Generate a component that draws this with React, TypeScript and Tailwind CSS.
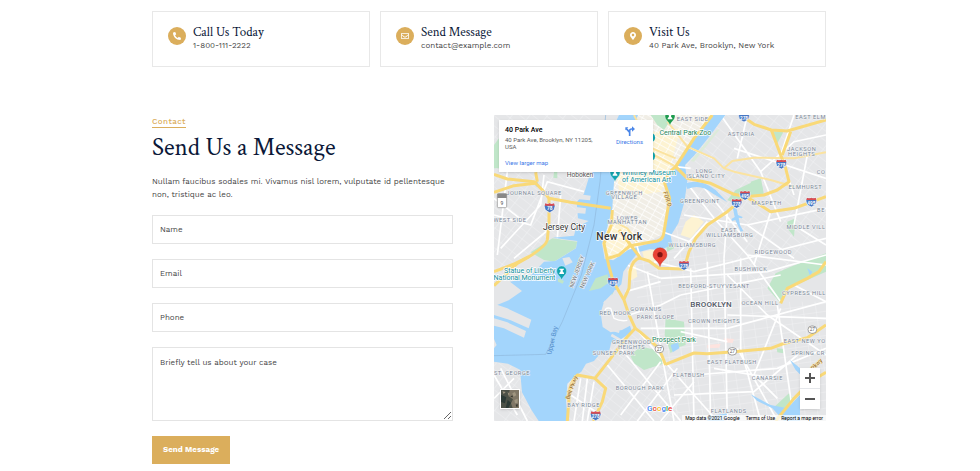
import { FaMapMarkerAlt, FaPhoneAlt, FaRegEnvelope } from 'react-icons/fa';

const cards = [
  { title: 'Call Us Today', text: '1-800-111-2222', icon: FaPhoneAlt },
  { title: 'Send Message', text: 'contact@example.com', icon: FaRegEnvelope },
  { title: 'Visit Us', text: '40 Park Ave, Brooklyn, New York', icon: FaMapMarkerAlt },
];

const highways = [
  'M0 178L40 192L120 200L145 225L165 250L230 262L350 280',
  'M0 232L60 212L130 204M125 172L130 200',
  'M165 250L165 320L160 375Q155 395 100 428L70 445L0 512',
  'M0 470L60 447L105 425',
  'M355 285L352 330L330 385L345 455L358 500L390 555L405 600L424 640',
  'M335 432L375 420L408 392L490 378Q508 374 510 350L527 250L512 205L525 172L545 155L600 70L655 0',
  'M375 345L410 390L440 430L465 438L495 460L570 462L585 410L605 370L640 330L700 290L752 245',
  'M390 552L405 520L408 470Q415 432 440 428',
  'M424 640L400 665L350 730L303 790L250 780Q222 810 225 850L220 918',
  'M303 790L335 820L325 860L298 918',
  'M424 640L440 652L495 700L515 750',
  'M515 748L600 714L640 716L720 710L830 700L865 687L940 668L996 630',
  'M545 155L580 190L650 205L720 238L755 245L810 240L850 225L885 200L875 160L860 120L832 45',
  'M740 0L780 28L832 45L880 48L996 15',
  'M755 245L785 262L830 290L900 280L996 245',
  'M860 565L880 520L940 490L975 470L996 440',
  'M865 120L890 50',
  'M845 918L900 850L950 800L996 772',
];

const avenues = [
  'M580 95L660 130L690 160L720 170L830 195L900 215',
  'M690 160L715 138L780 128L900 130L996 112',
  'M360 320L400 340L430 380',
  'M520 20L580 95',
  'M440 85L545 130',
  'M420 0L480 120L545 155',
];

const streets = [
  'M0 300L110 330L160 200L270 230M20 400L140 270L150 180M0 250L90 320M40 170L10 420M60 430L180 330M200 240L190 370',
  'M460 470L500 700L540 918M480 440L600 470L996 370M500 490L820 470L996 420M440 640L700 640L996 560',
  'M560 180L660 310L760 420L860 560M600 180L760 380M570 300L760 330L996 280M640 320L540 430M700 290L690 430',
  'M590 460L600 918M640 440L650 918M690 430L700 918M740 430L740 700L800 918M560 540L860 480',
  'M425 640L600 840L670 918M380 700L560 918M340 750L480 918M500 740L380 900M550 760L430 918M600 800L500 918',
  'M680 0L800 170L860 320M720 100L996 190M760 0L730 130M900 0L860 120L900 240M996 60L900 80L800 170M940 120L900 330L996 390',
  'M760 420L996 450M830 290L780 450M760 330L900 430M700 480L820 600L996 720M850 570L900 918M900 510L996 560M860 580L780 780L850 850',
  'M600 780L850 760L996 700M540 840L780 830L910 720M700 600L996 610M730 700L850 918M660 760L840 790M560 650L700 680',
  'M230 840L320 900M260 790L240 918M280 790L265 918M300 800L280 918',
  'M0 780L70 900M0 850L60 790M20 760L100 918M400 450L500 490M395 530L500 500M405 600L500 570L560 540',
];

const parks = [
  'M110 412L175 370L250 380L245 400L180 440L150 435Z',
  'M515 610L570 620L575 690L545 700L530 715L512 660Z',
  'M408 720L440 695L490 705L512 745L450 765L420 745Z',
  'M820 520L845 475L890 455L996 415L996 470L940 495L885 520L860 565Z',
  'M700 255L725 225L800 190L810 240L770 240L720 265Z',
  'M835 48L868 52L850 85Z',
  'M770 200L800 190L808 230L780 235Z',
  'M880 320L905 310L900 365L880 340Z',
  'M0 90L15 70L15 160L0 160Z',
  'M470 0L540 0L510 45L490 30Z',
  'M515 385L535 380L540 400L520 410Z',
  'M838 878L885 835L900 855L860 890Z',
  'M350 520L365 535L355 550Z',
  'M180 170L190 170L190 190L178 188Z',
  'M848 700L870 702L868 715L850 712Z',
];

const areas: [number, number, string][] = [
  [596, 18, 'EAST SIDE'],
  [742, 64, 'ASTORIA'],
  [950, 12, 'EAST ELM'],
  [923, 108, 'JACKSON'],
  [923, 123, 'HEIGHTS'],
  [631, 173, 'LONG'],
  [635, 188, 'ISLAND CITY'],
  [934, 221, 'ELMHURST'],
  [981, 178, 'CO'],
  [618, 265, 'GREENPOINT'],
  [818, 271, 'MASPETH'],
  [981, 291, 'BE'],
  [120, 241, 'JOURNAL SQUARE'],
  [391, 239, 'GREENWICH'],
  [391, 253, 'VILLAGE'],
  [400, 314, 'LOWER'],
  [400, 328, 'MANHATTAN'],
  [48, 320, 'WEST SIDE'],
  [705, 352, 'EAST'],
  [707, 367, 'WILLIAMSBURG'],
  [936, 341, 'MIDDLE VILL'],
  [595, 397, 'WILLIAMSBURG'],
  [838, 418, 'RIDGEWOOD'],
  [771, 469, 'BUSHWICK'],
  [660, 519, 'BEDFORD-STUYVESANT'],
  [930, 539, 'CYPRESS HILL'],
  [798, 571, 'OCEAN HILL'],
  [364, 600, 'RED HOOK'],
  [456, 589, 'GOWANUS'],
  [485, 613, 'PARK SLOPE'],
  [660, 623, 'CROWN HEIGHTS'],
  [932, 684, 'EAST NEW YO'],
  [413, 686, 'GREENWOOD'],
  [413, 701, 'HEIGHTS'],
  [360, 721, 'SUNSET PARK'],
  [942, 719, 'SPRING CR'],
  [714, 748, 'EAST FLATBUSH'],
  [584, 787, 'FLATBUSH'],
  [54, 781, 'ST. GEORGE'],
  [820, 794, 'CANARSIE'],
  [438, 825, 'BOROUGH PARK'],
  [269, 876, 'BAY RIDGE'],
  [704, 893, 'FLATLANDS'],
];

const interstates: [number, number, string][] = [
  [750, 6, '278'],
  [862, 147, '278'],
  [753, 241, '495'],
  [728, 265, '278'],
  [952, 261, '495'],
  [167, 278, '78'],
  [570, 451, '278'],
  [357, 501, '478'],
  [305, 902, '278'],
];

const routes: [number, number][] = [
  [496, 702],
  [715, 709],
  [955, 644],
];

function Interstate({ x, y, label }: { x: number; y: number; label: string }) {
  return (
    <g transform={`translate(${x} ${y})`}>
      <path
        d="M-13 -13Q-6 -9 0 -13Q6 -9 13 -13Q19 -4 14 5Q10 11 0 15Q-10 11 -14 5Q-19 -4 -13 -13Z"
        fill="#4677c4"
        stroke="#fff"
        strokeWidth="2"
      />
      <path d="M-13 -13Q-6 -9 0 -13Q6 -9 13 -13L15 -6H-15Z" fill="#dc4c50" />
      <text y="8" fontSize="14" fontWeight="700" fill="#fff" textAnchor="middle">
        {label}
      </text>
    </g>
  );
}

function Pin({ x, y, color }: { x: number; y: number; color: string }) {
  return (
    <g transform={`translate(${x} ${y})`}>
      <path d="M0 21C-3 9 -15 6 -15 -6A15 15 0 0 1 15 -6C15 6 3 9 0 21Z" fill={color} stroke="#fff" strokeWidth="1" />
      <path d="M-7 -13H7V-10H4L3 -5L7 0V3H-7V0L-3 -5L-4 -10H-7Z" fill="#fff" />
    </g>
  );
}

function MapDrawing() {
  return (
    <svg
      viewBox="0 0 996 918"
      preserveAspectRatio="xMidYMid slice"
      className="block h-full w-full font-[Roboto,sans-serif]"
      role="img"
      aria-label="Map of Brooklyn, New York"
    >
      <defs>
        <pattern id="grid-manhattan" width="28" height="15" patternUnits="userSpaceOnUse" patternTransform="rotate(29)">
          <path d="M0 0H28M0 0V15" stroke="#fff" strokeWidth="4" />
        </pattern>
        <pattern id="grid-brooklyn" width="38" height="24" patternUnits="userSpaceOnUse" patternTransform="rotate(-8)">
          <path d="M0 0H38M0 0V24" stroke="#f1f2f3" strokeWidth="3" />
        </pattern>
        <pattern id="grid-slope" width="42" height="24" patternUnits="userSpaceOnUse" patternTransform="rotate(38)">
          <path d="M0 0H42M0 0V24" stroke="#f1f2f3" strokeWidth="3" />
        </pattern>
      </defs>

      <rect width="996" height="918" fill="#e5e6e8" />
      <path d="M0 0H310L270 235L240 365L110 410L0 500Z" fill="url(#grid-slope)" />
      <path d="M690 0H996V330L860 560L560 300L575 150Z" fill="url(#grid-slope)" />
      <path d="M400 450L520 410L560 300L860 560H996V918H540Z" fill="url(#grid-brooklyn)" />
      <path d="M420 640L540 760L560 918H220V800Z" fill="url(#grid-slope)" />
      <path d="M0 740L75 760L130 918H0Z" fill="url(#grid-slope)" />
      <path d="M430 0H660L545 155L515 205L520 350L355 435L325 390L365 170Z" fill="#f1eee6" />
      <path d="M410 60L560 40L530 150L500 230L380 250L365 170Z" fill="#fdf3d2" />
      <path d="M350 320L400 340L410 395L345 430L328 390Z" fill="#fdf3d2" />
      <path d="M430 0H660L545 155L515 205L520 350L355 435L325 390L365 170Z" fill="url(#grid-manhattan)" />
      <path d="M575 320L600 300L630 320L590 370L560 360ZM445 410L500 400L480 440L450 430ZM400 465L425 450L430 485L405 500Z" fill="#fdf3d2" />
      <path d="M640 690L680 686L676 698L640 700ZM690 670L720 672L716 684L690 682Z" fill="#fde3df" />

      {parks.map((d) => (
        <path key={d} d={d} fill="#c0e6c9" />
      ))}
      {streets.map((d) => (
        <path key={d} d={d} fill="none" stroke="#fff" strokeWidth="5" />
      ))}

      <g fill="#a3d5fc">
        <path d="M375 0H432L395 90L362 170L355 280L338 345L324 385L332 432L358 436L402 405L450 390L505 375L522 300L515 205L550 152L600 74L658 0H694L648 62L600 122L573 150L580 200L571 262L553 325L530 362L535 388L500 406L468 402L432 412L404 448L388 470L382 508L366 524L330 560L320 594L326 636L350 652L384 645L408 632L414 650L382 672L352 682L346 706L318 716L300 738L276 746L262 770L244 782L220 806L216 860L222 918H134L112 884L84 832L78 764L42 746L0 740V574L44 556L84 528L48 500L104 488L150 440L184 438L246 400L250 378L176 368L240 362L246 338L284 318L252 310L248 262L270 236L284 190L320 120Z" />
        <path d="M575 205Q620 190 665 225L700 262L655 235Q620 205 580 222Z" />
        <path d="M716 276L728 282L732 300L746 306L744 310L734 308L738 330L748 348L740 350L724 315L714 318L712 312L722 306Z" />
        <path d="M530 690L552 682L556 700L536 712ZM888 735L925 765L920 780L905 765ZM940 460L955 470L948 482Z" />
        <path d="M770 838L830 870L880 880L918 840V918H870L835 880L790 858Z" />
        <path d="M640 905L700 895L690 918H640ZM120 205L132 200L128 216Z" />
      </g>
      <g fill="#e5e6e8">
        <path d="M0 566L40 580L112 614L104 640L50 616L0 600Z" />
        <path d="M0 610L40 622L96 648L90 668L30 640L0 632Z" />
        <path d="M328 588L350 570L384 562L390 620L372 635L345 640L328 622Z" />
        <path d="M205 430L226 426L236 442L214 452Z" />
        <path d="M0 672L8 690L0 700Z" />
        <path d="M246 236L290 242L288 256L246 252ZM246 276L276 280L274 296L246 294Z" />
      </g>
      <path d="M345 566L366 526M330 560L372 590M340 640L376 650M352 660L380 676M318 716L340 730" stroke="#e5e6e8" strokeWidth="8" />
      <path d="M285 528L305 490L340 478L348 500L320 520ZM192 490L210 498L206 506L192 500Z" fill="#c0e6c9" />
      <path d="M668 45L678 42L600 140L590 138Z" fill="#dcebd9" />
      <path d="M333 594Q330 575 350 580L360 610Q380 620 400 616" fill="none" stroke="#fff" strokeWidth="4" />
      <path d="M425 380L440 430M505 350L600 385M580 95L655 130M545 155L590 160" stroke="#fff" strokeWidth="5" />
      <path d="M335 0L318 200L300 330L262 480L205 620L155 718L0 722" fill="none" stroke="#8fb8dc" strokeWidth="2" />

      {avenues.map((d) => (
        <path key={d} d={d} fill="none" stroke="#fbe3a0" strokeWidth="6" strokeLinejoin="round" />
      ))}
      {highways.map((d) => (
        <path key={d} d={d} fill="none" stroke="#f9d978" strokeWidth="9" strokeLinejoin="round" />
      ))}

      <g fontSize="17" fill="#7b8797" textAnchor="middle" className="tracking-widest" stroke="#f4f5f6" strokeWidth="3" paintOrder="stroke">
        {areas.map(([x, y, name]) => (
          <text key={`${name}-${y}`} x={x} y={y}>
            {name}
          </text>
        ))}
      </g>
      {interstates.map(([x, y, label]) => (
        <Interstate key={`${x}-${y}`} x={x} y={y} label={label} />
      ))}
      {routes.map(([x, y]) => (
        <g key={x} transform={`translate(${x} ${y})`}>
          <rect x="-13" y="-11" width="26" height="22" rx="11" fill="#fff" stroke="#777" strokeWidth="2" />
          <text y="5" fontSize="14" fill="#555" textAnchor="middle">
            27
          </text>
        </g>
      ))}
      <rect x="10" y="236" width="28" height="42" rx="4" fill="#fff" stroke="#888" strokeWidth="2" />
      <rect x="10" y="236" width="28" height="13" fill="#888" />
      <text x="24" y="270" fontSize="15" fill="#444" textAnchor="middle">
        9
      </text>

      <g stroke="#fff" strokeWidth="4" paintOrder="stroke" textAnchor="middle">
        <text x="258" y="186" fontSize="20" fill="#555">
          Hoboken
        </text>
        <text x="210" y="344" fontSize="26" fill="#333">
          Jersey City
        </text>
        <text x="376" y="374" fontSize="31" fontWeight="500" fill="#333" className="tracking-wide">
          New York
        </text>
        <text x="651" y="576" fontSize="24" fontWeight="600" fill="#59616d" className="tracking-wide">
          BROOKLYN
        </text>
        <g fontSize="21" fill="#25865a">
          <text x="574" y="59">Central Park Zoo</text>
          <text x="540" y="680">Prospect Park</text>
        </g>
        <g fontSize="21" fill="#12909c" textAnchor="start">
          <text x="384" y="179">Whitney Museum</text>
          <text x="384" y="201">of American Art</text>
        </g>
        <g fontSize="21" fill="#12909c" textAnchor="end">
          <text x="184" y="473">Statue of Liberty</text>
          <text x="184" y="495">National Monument</text>
        </g>
      </g>
      <g fontSize="17" textAnchor="middle">
        <g fill="#777" stroke="#e8eff5" strokeWidth="4" paintOrder="stroke">
          <text transform="translate(254 472) rotate(-70)">NEW JERSEY</text>
          <text transform="translate(285 483) rotate(-66)">NEW YORK</text>
        </g>
        <text transform="translate(181 677) rotate(-78)" fontSize="19" fill="#4f8ac9">
          Upper Bay
        </text>
        <g fill="#8a6224" stroke="#fbe9b8" strokeWidth="3" paintOrder="stroke">
          <text transform="translate(238 820) rotate(-70)">Belt Pkwy</text>
          <text transform="translate(515 254) rotate(72)">FDR D</text>
          <text transform="translate(972 752) rotate(-45)">Pkwy</text>
        </g>
      </g>

      <Pin x={528} y={10} color="#1e9b4f" />
      <Pin x={363} y={179} color="#12a4b0" />
      <Pin x={203} y={474} color="#12a4b0" />
      <path d="M476 55A15 15 0 0 1 476 81ZM476 110A15 15 0 0 1 476 136Z" fill="#12a4b0" />

      {/* office marker */}
      <path
        d="M498 455C495 438 477 434 477 419A21 21 0 0 1 519 419C519 434 501 438 498 455Z"
        fill="#ea4335"
        stroke="#b52d23"
        strokeWidth="1"
      />
      <circle cx="498" cy="419" r="8" fill="#811411" />

      <text x="497" y="889" fontSize="24" fontWeight="500" textAnchor="middle" stroke="#fff" strokeWidth="4" paintOrder="stroke">
        <tspan fill="#4285f4">G</tspan>
        <tspan fill="#ea4335">o</tspan>
        <tspan fill="#fbbc04">o</tspan>
        <tspan fill="#4285f4">g</tspan>
        <tspan fill="#34a853">l</tspan>
        <tspan fill="#ea4335">e</tspan>
      </text>
    </svg>
  );
}

function OfficeMap() {
  return (
    <div className="relative h-[306px] overflow-hidden bg-[#e5e6e8] font-[Roboto,sans-serif]">
      <MapDrawing />

      <div className="absolute left-[5px] top-[5px] flex w-[154px] justify-between bg-white pb-1 pl-[6px] pr-[10px] pt-1 shadow-sm">
        <div>
          <p className="text-[7px] font-medium leading-3 text-black">40 Park Ave</p>
          <p className="w-[94px] text-[6px] leading-[7px] text-[#5b5b5b]">40 Park Ave, Brooklyn, NY 11205, USA</p>
          <a href="#map" className="mt-2 block text-[6px] leading-[10px] text-[#3b78e7]">
            View larger map
          </a>
        </div>
        <a href="#directions" className="flex flex-col items-center gap-px pt-[2px] text-[6px] leading-[10px] text-[#3b78e7]">
          <svg viewBox="0 0 30 30" className="h-[10px] w-[10px]" aria-hidden="true">
            <path d="M14 30V19L4 8M14 20V14Q14 9 20 9H23" fill="none" stroke="#4a86e8" strokeWidth="5" />
            <path d="M1 4H10L1 13ZM21 1L30 9L21 17Z" fill="#4a86e8" />
          </svg>
          Directions
        </a>
      </div>

      <button type="button" aria-label="Show satellite imagery" className="absolute bottom-3 left-[6px] h-5 w-5 border border-white shadow-sm">
        <svg viewBox="0 0 54 54" className="block h-full w-full">
          <rect width="54" height="54" fill="#4c5147" />
          <path d="M26 0H54V54H35L30 40L36 28L22 18Z" fill="#807766" />
          <path d="M0 14L16 22L12 40L0 36ZM20 30L30 38L22 54H14Z" fill="#2c3a36" />
          <path d="M34 10L42 6L46 16L38 20ZM40 30L50 26V38L42 40ZM4 4L14 6L8 12ZM20 6L26 12L22 16Z" fill="#a09680" />
          <path d="M28 20L34 16L36 22ZM44 44L50 42V50L46 50Z" fill="#35372f" />
        </svg>
      </button>

      <div className="absolute bottom-3 right-[6px] flex w-5 flex-col divide-y divide-gray-200 bg-white shadow-sm">
        <button type="button" aria-label="Zoom in" className="flex h-[21px] items-center justify-center">
          <svg viewBox="0 0 10 10" className="h-[10px] w-[10px]">
            <path d="M0 5H10M5 0V10" stroke="#555" strokeWidth="2" />
          </svg>
        </button>
        <button type="button" aria-label="Zoom out" className="flex h-5 items-center justify-center">
          <svg viewBox="0 0 10 10" className="h-[10px] w-[10px]">
            <path d="M0 5H10" stroke="#555" strokeWidth="2" />
          </svg>
        </button>
      </div>

      <div className="absolute bottom-0 right-0 flex gap-[6px] bg-white/70 px-[3px] text-[5px] leading-[6px] text-black">
        <span>Map data ©2021 Google</span>
        <a href="#terms">Terms of Use</a>
        <a href="#report">Report a map error</a>
      </div>
    </div>
  );
}

const fieldClass =
  'block w-full border border-[#e4e4e4] bg-white px-[7px] text-[8px] text-[#444] placeholder:text-[#444] placeholder:opacity-100 outline-none';

function ContactForm() {
  return (
    <form className="mt-[14px] flex flex-col gap-[15px]">
      <input type="text" aria-label="Name" placeholder="Name" className={`${fieldClass} h-[29px]`} />
      <input type="email" aria-label="Email" placeholder="Email" className={`${fieldClass} h-[29px]`} />
      <input type="tel" aria-label="Phone" placeholder="Phone" className={`${fieldClass} h-[29px]`} />
      <textarea
        aria-label="Briefly tell us about your case"
        placeholder="Briefly tell us about your case"
        className={`${fieldClass} h-[74px] resize py-2 leading-[14px]`}
      />
      <button type="submit" className="h-7 self-start bg-[#dbae5c] px-[11px] text-[8px] font-bold text-white">
        Send Message
      </button>
    </form>
  );
}

export default function App() {
  return (
    <main className="bg-white pr-[2px] pt-[11px] font-['Work_Sans',Inter,sans-serif] text-[8px] text-[#444]">
      <div className="mx-auto max-w-[674px]">
        <section className="grid grid-cols-3 gap-[10px]">
          {cards.map(({ title, text, icon: Icon }) => (
            <div key={title} className="flex gap-[7px] border border-[#e8e8e8] px-[15px] pb-[14px] pt-[13px]">
              <span className="mt-[2px] flex h-[18px] w-[18px] shrink-0 items-center justify-center rounded-full bg-[#dbae5c] text-white">
                <Icon className="h-2 w-2" />
              </span>
              <div>
                <h3 className="font-['Crimson_Text','Liberation_Serif',serif] text-[13px] leading-[15px] text-[#0b1838]">
                  {title}
                </h3>
                <p className="leading-3">{text}</p>
              </div>
            </div>
          ))}
        </section>

        <section className="mt-12 grid grid-cols-[301fr_332fr] gap-[41px]">
          <div>
            <a
              href="#contact"
              className="mt-px inline-block border-b border-[#dbae5c] font-medium leading-[11px] tracking-wider text-[#dbae5c]"
            >
              Contact
            </a>
            <h2 className="mt-[5px] font-['Crimson_Text','Liberation_Serif',serif] text-[25px] leading-[30px] text-[#0b1838]">
              Send Us a Message
            </h2>
            <p className="mt-3 leading-[13px]">
              Nullam faucibus sodales mi. Vivamus nisl lorem, vulputate id pellentesque non, tristique ac leo.
            </p>
            <ContactForm />
          </div>
          <OfficeMap />
        </section>
      </div>
    </main>
  );
}
